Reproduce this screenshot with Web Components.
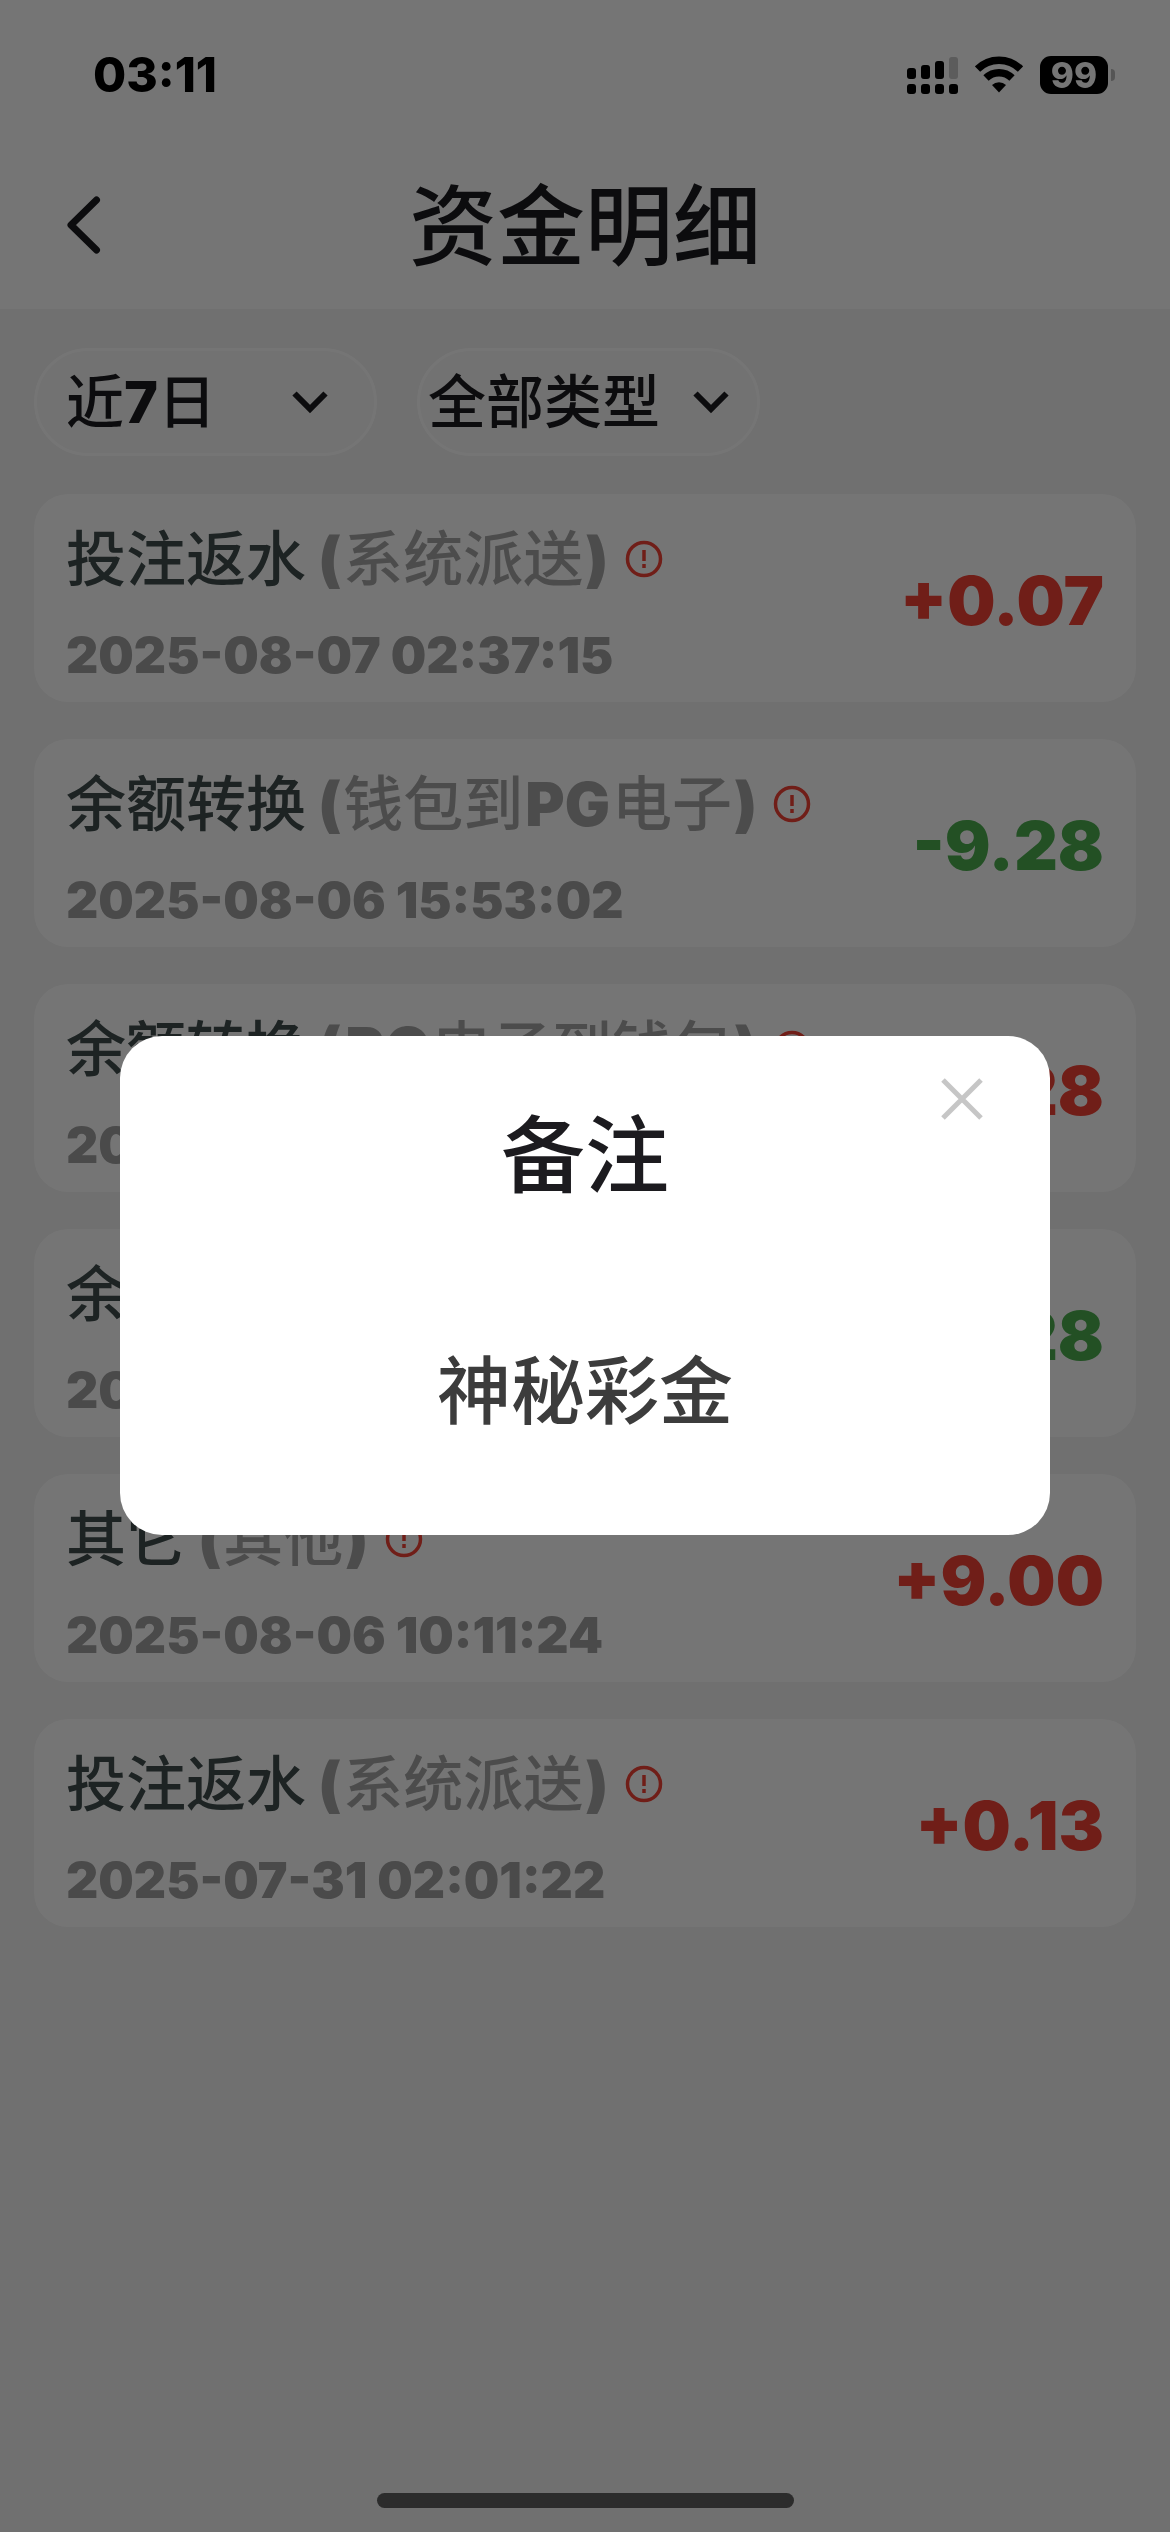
<!DOCTYPE html>
<html lang="zh-CN">
<head>
  <meta charset="utf-8">
  <meta name="viewport" content="width=device-width, initial-scale=1">
  <title>资金明细</title>
  <style>
    body {
      margin: 0;
      min-height: 100vh;
      background: #f3f3f3;
      font-family: Inter, "Noto Sans CJK SC", sans-serif;
      font-weight: 500;
    }
  </style>
</head>
<body>
  <status-bar time="03:11" battery="99"></status-bar>

  <page-header>资金明细</page-header>

  <fund-list>
    <filter-select slot="filters" label="时间" value="近7日" style="--start: 29px; --end: 46px"></filter-select>
    <filter-select slot="filters" label="类型" value="全部类型" style="--start: 8px; --end: 28px"></filter-select>

    <fund-item heading="投注返水" source="(系统派送)" time="2025-08-07 02:37:15" amount="+0.07"></fund-item>
    <fund-item heading="余额转换" source="(钱包到PG电子)" time="2025-08-06 15:53:02" amount="-9.28"></fund-item>
    <fund-item heading="余额转换" source="(PG电子到钱包)" time="2025-08-06 15:52:40" amount="+9.28"></fund-item>
    <fund-item heading="余额转换" source="(钱包到PG电子)" time="2025-08-06 15:50:12" amount="-9.28"></fund-item>
    <fund-item heading="其它" source="(其他)" time="2025-08-06 10:11:24" amount="+9.00"></fund-item>
    <fund-item heading="投注返水" source="(系统派送)" time="2025-07-31 02:01:22" amount="+0.13"></fund-item>
  </fund-list>

  <remark-dialog heading="备注">神秘彩金</remark-dialog>

  <home-indicator></home-indicator>

  <script>
    const STATUS_BAR_TEMPLATE = document.createElement('template');
    STATUS_BAR_TEMPLATE.innerHTML = `
      <style>
        :host {
          position: sticky;
          top: 0;
          z-index: 3;
          display: flex;
          align-items: center;
          justify-content: space-between;
          box-sizing: border-box;
          height: 141px;
          padding: 8px 55px 0 93px;
          color: #000;
        }

        time {
          font-size: 48px;
          font-weight: 800;
        }

        .icons {
          display: flex;
          align-items: center;
        }

        .signal {
          margin-right: 17px;
        }

        .wifi {
          margin-right: 17px;
        }

        .battery {
          width: 68px;
          height: 38px;
          border-radius: 11px;
          background: #000;
          color: #757575;
          font-size: 35px;
          font-weight: 800;
          line-height: 38px;
          text-align: center;
        }

        .nub {
          width: 4px;
          height: 12px;
          margin-left: 3px;
          border-radius: 0 4px 4px 0;
          background: #555;
        }
      </style>

      <time></time>
      <div class="icons">
        <svg class="signal" width="51" height="38" viewBox="0 0 51 38" aria-hidden="true">
          <rect x="0" y="12" width="9" height="11" rx="3"/>
          <rect x="14" y="9" width="9" height="14" rx="3"/>
          <rect x="28" y="5" width="9" height="18" rx="3"/>
          <rect x="42" y="1" width="9" height="22" rx="3" fill="#5c5c5c"/>
          <rect x="0" y="28" width="9" height="10" rx="3"/>
          <rect x="14" y="28" width="9" height="10" rx="3"/>
          <rect x="28" y="28" width="9" height="10" rx="3"/>
          <rect x="42" y="28" width="9" height="10" rx="3"/>
        </svg>
        <svg class="wifi" width="48" height="38" viewBox="0 0 48 38" aria-hidden="true">
          <g fill="none" stroke="#000" stroke-width="7.500">
            <path d="M2.500 13a30.500 30.500 0 0 1 43 0"/>
            <path d="M11 22a18.500 18.500 0 0 1 26 0"/>
          </g>
          <path d="M24 36.500l-7-7.500a10 10 0 0 1 14 0z"/>
        </svg>
        <div class="battery"></div>
        <div class="nub"></div>
      </div>
    `;

    class StatusBar extends HTMLElement {
      constructor() {
        super();

        this.attachShadow({ mode: 'open' });
        this.shadowRoot.appendChild(STATUS_BAR_TEMPLATE.content.cloneNode(true));

        this.shadowRoot.querySelector('time').textContent = this.getAttribute('time');
        this.shadowRoot.querySelector('.battery').textContent = this.getAttribute('battery');
      }
    }

    const PAGE_HEADER_TEMPLATE = document.createElement('template');
    PAGE_HEADER_TEMPLATE.innerHTML = `
      <style>
        :host {
          display: grid;
          grid-template-columns: 1fr auto 1fr;
          align-items: center;
          height: 168px;
          margin-top: -141px;
          padding: 141px 34px 0;
          background: #fff;
          color: #1c1b1f;
        }

        button {
          justify-self: start;
          display: flex;
          padding: 16px 30px;
          border: 0;
          background: none;
          color: inherit;
        }

        h1 {
          margin: 0;
          padding-top: 2px;
          font-size: 88px;
          font-weight: 500;
          line-height: 120px;
        }
      </style>

      <button type="button" aria-label="返回">
        <svg width="40" height="64" viewBox="0 0 40 64" fill="none" stroke="currentColor" stroke-width="7" stroke-linecap="round" stroke-linejoin="round">
          <path d="M32.500 7L7 32l25.500 25"/>
        </svg>
      </button>
      <h1><slot></slot></h1>
    `;

    class PageHeader extends HTMLElement {
      constructor() {
        super();

        this.attachShadow({ mode: 'open' });
        this.shadowRoot.appendChild(PAGE_HEADER_TEMPLATE.content.cloneNode(true));
      }
    }

    const FILTER_SELECT_TEMPLATE = document.createElement('template');
    FILTER_SELECT_TEMPLATE.innerHTML = `
      <style>
        :host {
          display: grid;
          align-items: center;
          box-sizing: border-box;
          width: 343px;
          height: 108px;
          border: 3px solid #fff;
          border-radius: 54px;
          background: #f8f8f8;
          color: #1c1b1f;
        }

        select,
        svg {
          grid-area: 1 / 1;
        }

        select {
          width: 100%;
          height: 100%;
          padding: 0 0 0 var(--start);
          border: 0;
          appearance: none;
          background: none;
          color: inherit;
          font-family: "Inter ExtraBold", Inter, "Noto Sans CJK SC", sans-serif;
          font-size: 58px;
          font-weight: 500;
        }

        svg {
          justify-self: end;
          margin-right: var(--end);
          pointer-events: none;
        }
      </style>

      <select><option></option></select>
      <svg width="36" height="24" viewBox="0 0 36 24" fill="none" stroke="currentColor" stroke-width="6" aria-hidden="true">
        <path d="M2.500 3.500L18 19 33.500 3.500"/>
      </svg>
    `;

    class FilterSelect extends HTMLElement {
      constructor() {
        super();

        this.attachShadow({ mode: 'open' });
        this.shadowRoot.appendChild(FILTER_SELECT_TEMPLATE.content.cloneNode(true));

        this.shadowRoot.querySelector('select').setAttribute('aria-label', this.getAttribute('label'));
        this.shadowRoot.querySelector('option').textContent = this.getAttribute('value');
      }
    }

    const FUND_LIST_TEMPLATE = document.createElement('template');
    FUND_LIST_TEMPLATE.innerHTML = `
      <style>
        :host {
          display: block;
          padding: 39px 34px 140px;
        }

        .filters {
          display: flex;
          gap: 40px;
          margin-bottom: 38px;
        }

        .items {
          display: flex;
          flex-direction: column;
          gap: 37px;
        }
      </style>

      <div class="filters"><slot name="filters"></slot></div>
      <div class="items"><slot></slot></div>
    `;

    class FundList extends HTMLElement {
      constructor() {
        super();

        this.attachShadow({ mode: 'open' });
        this.shadowRoot.appendChild(FUND_LIST_TEMPLATE.content.cloneNode(true));
      }
    }

    const FUND_ITEM_TEMPLATE = document.createElement('template');
    FUND_ITEM_TEMPLATE.innerHTML = `
      <style>
        :host {
          display: flex;
          align-items: center;
          justify-content: space-between;
          padding: 23px 32px 20px;
          border-radius: 34px;
          background: #fff;
        }

        .info {
          display: grid;
          gap: 27px;
        }

        .title {
          display: flex;
          align-items: center;
          font-size: 60px;
          line-height: 84px;
          white-space: nowrap;
        }

        .heading {
          margin-right: 10px;
          color: #414e4e;
        }

        .source {
          color: #a7a7a7;
        }

        .source b {
          margin: 0 2px;
          font-weight: 900;
        }

        button {
          display: flex;
          margin-left: 12px;
          padding: 0;
          border: 0;
          background: none;
          color: #f44336;
        }

        time {
          color: #a1a1a1;
          font-size: 50px;
          font-weight: 900;
          line-height: 54px;
        }

        .amount {
          color: #f44336;
          font-size: 68px;
          font-weight: 900;
          line-height: 80px;
        }

        .amount.out {
          color: #4caf50;
        }
      </style>

      <div class="info">
        <div class="title">
          <span class="heading"></span>
          <span class="source"></span>
          <button type="button" aria-label="备注">
            <svg width="42" height="42" viewBox="0 0 42 42" fill="none" stroke="currentColor" stroke-width="3.500">
              <circle cx="21" cy="21" r="16.500"/>
              <path d="M21 12v11M21 26v4"/>
            </svg>
          </button>
        </div>
        <time></time>
      </div>
      <span class="amount"></span>
    `;

    class FundItem extends HTMLElement {
      constructor() {
        super();

        this.attachShadow({ mode: 'open' });
        this.shadowRoot.appendChild(FUND_ITEM_TEMPLATE.content.cloneNode(true));

        const amount = this.shadowRoot.querySelector('.amount');
        amount.textContent = this.getAttribute('amount');
        amount.classList.toggle('out', this.getAttribute('amount').startsWith('-'));

        this.shadowRoot.querySelector('.heading').textContent = this.getAttribute('heading');
        this.shadowRoot.querySelector('time').textContent = this.getAttribute('time');

        // latin letters and brackets are set heavier than the chinese text
        this.shadowRoot.querySelector('.source').innerHTML =
          this.getAttribute('source').replace(/[()]|[A-Z]+/g, '<b>$&</b>');
      }
    }

    const REMARK_DIALOG_TEMPLATE = document.createElement('template');
    REMARK_DIALOG_TEMPLATE.innerHTML = `
      <style>
        :host {
          position: fixed;
          inset: 0;
          z-index: 2;
          display: flex;
          align-items: center;
          justify-content: center;
          padding: 141px 120px 102px;
          background: rgba(0, 0, 0, .54);
        }

        section {
          position: relative;
          flex: 1;
          padding: 60px 40px 92px;
          border-radius: 42px;
          background: #fff;
          text-align: center;
        }

        h2 {
          margin: 0 0 123px;
          color: #1c1b1f;
          font-size: 84px;
          font-weight: 500;
          line-height: 120px;
        }

        p {
          margin: 0;
          color: #3c3c3c;
          font-size: 74px;
          line-height: 104px;
        }

        button {
          position: absolute;
          top: 31px;
          right: 56px;
          display: flex;
          padding: 10px;
          border: 0;
          background: none;
          color: #c6c6c6;
        }
      </style>

      <section role="dialog" aria-modal="true" aria-labelledby="heading">
        <h2 id="heading"></h2>
        <p><slot></slot></p>
        <button type="button" aria-label="关闭">
          <svg width="44" height="44" viewBox="0 0 44 44" fill="none" stroke="currentColor" stroke-width="5">
            <path d="M3 3l38 38M41 3L3 41"/>
          </svg>
        </button>
      </section>
    `;

    class RemarkDialog extends HTMLElement {
      constructor() {
        super();

        this.attachShadow({ mode: 'open' });
        this.shadowRoot.appendChild(REMARK_DIALOG_TEMPLATE.content.cloneNode(true));

        this.shadowRoot.querySelector('h2').textContent = this.getAttribute('heading');
        this.shadowRoot.querySelector('button').addEventListener('click', () => this.remove());
      }
    }

    const HOME_INDICATOR_TEMPLATE = document.createElement('template');
    HOME_INDICATOR_TEMPLATE.innerHTML = `
      <style>
        :host {
          position: fixed;
          right: 0;
          bottom: 24px;
          left: 0;
          z-index: 3;
          display: flex;
          justify-content: center;
          pointer-events: none;
        }

        div {
          width: 417px;
          height: 15px;
          border-radius: 8px;
          background: #2c2c2c;
        }
      </style>

      <div></div>
    `;

    class HomeIndicator extends HTMLElement {
      constructor() {
        super();

        this.attachShadow({ mode: 'open' });
        this.shadowRoot.appendChild(HOME_INDICATOR_TEMPLATE.content.cloneNode(true));
      }
    }

    window.customElements.define('status-bar', StatusBar);
    window.customElements.define('page-header', PageHeader);
    window.customElements.define('filter-select', FilterSelect);
    window.customElements.define('fund-list', FundList);
    window.customElements.define('fund-item', FundItem);
    window.customElements.define('remark-dialog', RemarkDialog);
    window.customElements.define('home-indicator', HomeIndicator);
  </script>
</body>
</html>
